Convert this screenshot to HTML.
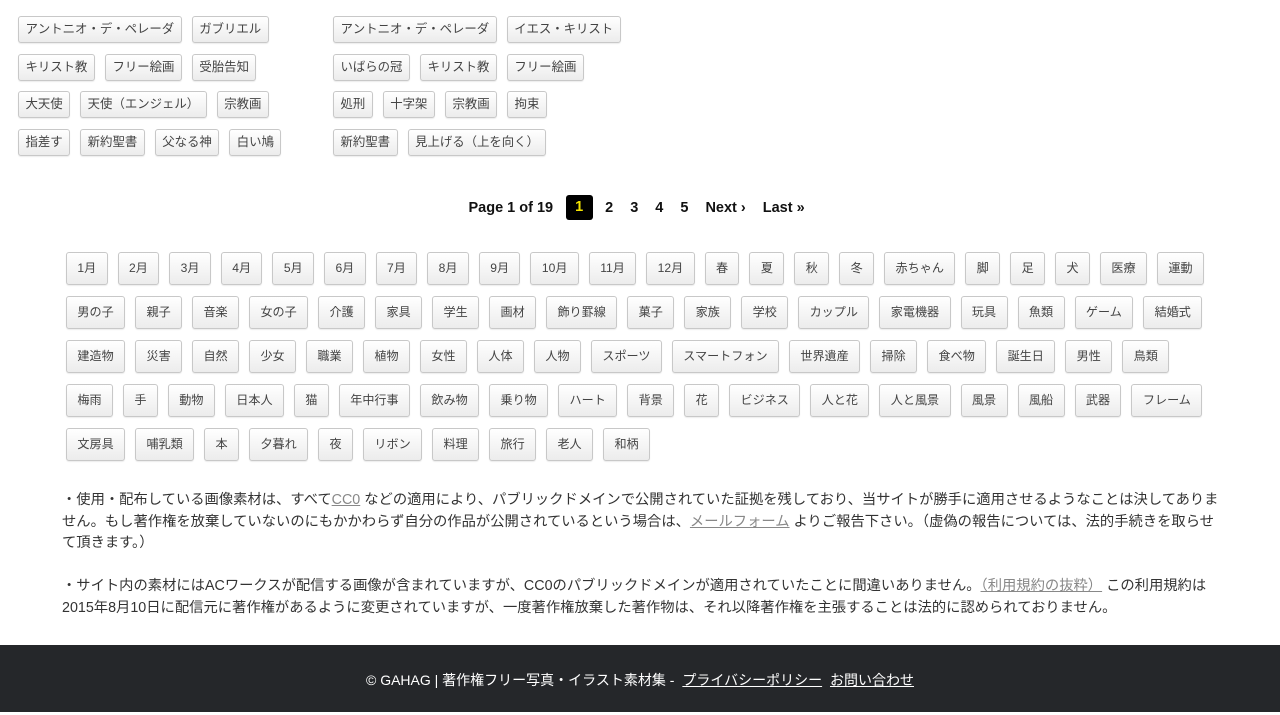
<!DOCTYPE html>
<html><head><meta charset="utf-8"><style>
*{box-sizing:border-box;margin:0;padding:0}
body{width:1280px;height:712px;background:#fff;font-family:"Liberation Sans","Noto Sans CJK JP",sans-serif;color:#333;position:relative;overflow:hidden}
.t{display:inline-block;border:1px solid #c8c8c8;border-radius:3px;background:linear-gradient(#fff,#ececec);color:#444;white-space:nowrap;box-shadow:0 1px 1px rgba(0,0,0,.08)}
.top .t{height:27px;line-height:25px;padding:0 6.5px;margin-right:10px;font-size:12.4px}
.top .r{height:37.5px;white-space:nowrap;font-size:0}
.top{position:absolute;top:16px}
.bot{position:absolute;left:66px;top:252px}
.bot .r{height:44px;white-space:nowrap;font-size:0}
.bot .t{height:33px;line-height:31px;padding:0 10.4px;margin-right:10px;font-size:12.1px}
.pg{position:absolute;top:195px;left:460px;height:25px;display:flex;align-items:center;font-weight:bold;font-size:14.5px;color:#111}
.pg span{padding:0 8.5px}
.pg .cur{background:#000;color:#f5e400;border-radius:3px;height:25px;line-height:25px;width:27px;padding:0;text-align:center;margin:0 4px}
.txt{position:absolute;left:62px;top:490px;font-size:14.3px;line-height:21.5px;color:#333;white-space:nowrap}
.txt a{color:#888;text-decoration:underline}
.ft{position:absolute;left:0;top:645px;width:1280px;height:67px;background:#25272a;color:#fff;font-size:14px;text-align:center;line-height:70px}
.ft a{color:#fff;text-decoration:underline;margin-left:4px}
</style></head><body>
<div class="top" style="left:18px">
<div class="r"><span class="t">アントニオ・デ・ペレーダ</span><span class="t">ガブリエル</span></div>
<div class="r"><span class="t">キリスト教</span><span class="t">フリー絵画</span><span class="t">受胎告知</span></div>
<div class="r"><span class="t">大天使</span><span class="t">天使（エンジェル）</span><span class="t">宗教画</span></div>
<div class="r"><span class="t">指差す</span><span class="t">新約聖書</span><span class="t">父なる神</span><span class="t">白い鳩</span></div>
</div>
<div class="top" style="left:333px">
<div class="r"><span class="t">アントニオ・デ・ペレーダ</span><span class="t">イエス・キリスト</span></div>
<div class="r"><span class="t">いばらの冠</span><span class="t">キリスト教</span><span class="t">フリー絵画</span></div>
<div class="r"><span class="t">処刑</span><span class="t">十字架</span><span class="t">宗教画</span><span class="t">拘束</span></div>
<div class="r"><span class="t">新約聖書</span><span class="t">見上げる（上を向く）</span></div>
</div>
<div class="pg"><span>Page 1 of 19</span><span class="cur">1</span><span>2</span><span>3</span><span>4</span><span>5</span><span>Next ›</span><span>Last »</span></div>
<div class="bot">
<div class="r"><span class="t">1月</span><span class="t">2月</span><span class="t">3月</span><span class="t">4月</span><span class="t">5月</span><span class="t">6月</span><span class="t">7月</span><span class="t">8月</span><span class="t">9月</span><span class="t">10月</span><span class="t">11月</span><span class="t">12月</span><span class="t">春</span><span class="t">夏</span><span class="t">秋</span><span class="t">冬</span><span class="t">赤ちゃん</span><span class="t">脚</span><span class="t">足</span><span class="t">犬</span><span class="t">医療</span><span class="t">運動</span></div>
<div class="r"><span class="t">男の子</span><span class="t">親子</span><span class="t">音楽</span><span class="t">女の子</span><span class="t">介護</span><span class="t">家具</span><span class="t">学生</span><span class="t">画材</span><span class="t">飾り罫線</span><span class="t">菓子</span><span class="t">家族</span><span class="t">学校</span><span class="t">カップル</span><span class="t">家電機器</span><span class="t">玩具</span><span class="t">魚類</span><span class="t">ゲーム</span><span class="t">結婚式</span></div>
<div class="r"><span class="t">建造物</span><span class="t">災害</span><span class="t">自然</span><span class="t">少女</span><span class="t">職業</span><span class="t">植物</span><span class="t">女性</span><span class="t">人体</span><span class="t">人物</span><span class="t">スポーツ</span><span class="t">スマートフォン</span><span class="t">世界遺産</span><span class="t">掃除</span><span class="t">食べ物</span><span class="t">誕生日</span><span class="t">男性</span><span class="t">鳥類</span></div>
<div class="r"><span class="t">梅雨</span><span class="t">手</span><span class="t">動物</span><span class="t">日本人</span><span class="t">猫</span><span class="t">年中行事</span><span class="t">飲み物</span><span class="t">乗り物</span><span class="t">ハート</span><span class="t">背景</span><span class="t">花</span><span class="t">ビジネス</span><span class="t">人と花</span><span class="t">人と風景</span><span class="t">風景</span><span class="t">風船</span><span class="t">武器</span><span class="t">フレーム</span></div>
<div class="r"><span class="t">文房具</span><span class="t">哺乳類</span><span class="t">本</span><span class="t">夕暮れ</span><span class="t">夜</span><span class="t">リボン</span><span class="t">料理</span><span class="t">旅行</span><span class="t">老人</span><span class="t">和柄</span></div>
</div>
<div class="txt">・使用・配布している画像素材は、すべて<a>CC0</a> などの適用により、パブリックドメインで公開されていた証拠を残しており、当サイトが勝手に適用させるようなことは決してありま<br>せん。もし著作権を放棄していないのにもかかわらず自分の作品が公開されているという場合は、<a>メールフォーム</a> よりご報告下さい。（虚偽の報告については、法的手続きを取らせ<br>て頂きます。）<br><br>・サイト内の素材にはACワークスが配信する画像が含まれていますが、CC0のパブリックドメインが適用されていたことに間違いありません。<a>（利用規約の抜粋）</a> この利用規約は<br>2015年8月10日に配信元に著作権があるように変更されていますが、一度著作権放棄した著作物は、それ以降著作権を主張することは法的に認められておりません。</div>
<div class="ft">© GAHAG | 著作権フリー写真・イラスト素材集 - <a>プライバシーポリシー</a> <a>お問い合わせ</a></div>
</body></html>
